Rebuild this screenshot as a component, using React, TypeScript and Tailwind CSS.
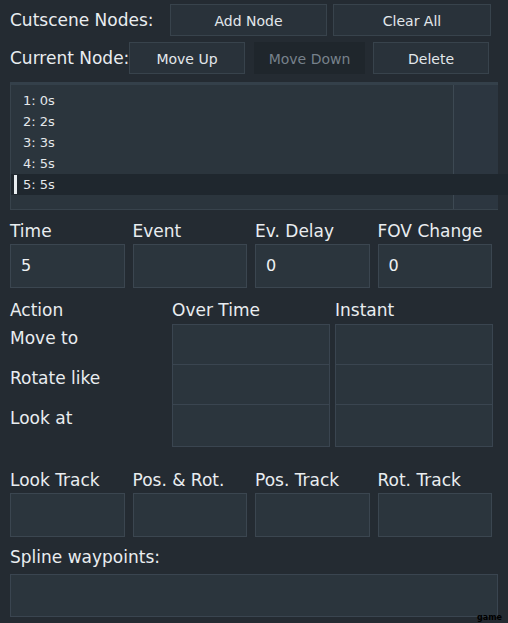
const font = { fontFamily: '"DejaVu Sans", "Liberation Sans", sans-serif' };

function Btn({ label, w, disabled }: { label: string; w: string; disabled?: boolean }) {
  return (
    <div
      className={`${w} h-[32px] flex items-center justify-center text-[14px] pt-[2px] ${
        disabled
          ? "bg-[#1f262c] text-[#77818b]"
          : "bg-[#29323a] text-[#e2e7eb] border border-[#38434c]"
      }`}
    >
      {label}
    </div>
  );
}

function Field({ value, h }: { value?: string; h: string }) {
  return (
    <div className={`${h} bg-[#2b353d] border border-[#3b4650] flex items-center pl-[10px] text-[16px] text-[#eef1f3]`}>
      {value}
    </div>
  );
}

const nodes = ["1: 0s", "2: 2s", "3: 3s", "4: 5s", "5: 5s"];

export default function App() {
  return (
    <div
      style={font}
      className="relative w-[508px] h-[623px] overflow-hidden bg-[#242b32] text-[#e9edf0] pl-[10px]"
    >
      <div className="flex items-center mt-[4px] h-[32px]">
        <div className="w-[160px] text-[17px] pt-[2px]">Cutscene Nodes:</div>
        <Btn label="Add Node" w="w-[157px]" />
        <div className="w-[6px]" />
        <Btn label="Clear All" w="w-[158px]" />
      </div>

      <div className="flex items-center mt-[6px] h-[32px]">
        <div className="w-[119px] text-[17px] pt-[1px] whitespace-nowrap">Current Node:</div>
        <Btn label="Move Up" w="w-[116px]" />
        <div className="w-[9px]" />
        <Btn label="Move Down" w="w-[111px]" disabled />
        <div className="w-[8px]" />
        <Btn label="Delete" w="w-[116px]" />
      </div>

      <div className="relative mt-[8px] w-[488px] h-[128px] bg-[#2b353d] border border-[#38434c] border-t-[3px] border-t-[#34404a]">
        <div className="absolute top-0 bottom-0 left-[442px] w-[45px] bg-[#2c3640] border-l border-[#3d4953]" />
        <div className="relative pt-[5px] flex flex-col">
          {nodes.map((n, i) => (
            <div
              key={i}
              className={`h-[21px] flex items-center text-[13px] text-[#e4e8eb] ${
                i === 4 ? "bg-[#1f272e] mr-[-12px]" : ""
              }`}
            >
              <div className={`w-[3px] h-[19px] ml-[3px] mr-[6px] ${i === 4 ? "bg-[#e8edf0]" : ""}`} />
              {n}
            </div>
          ))}
        </div>
      </div>

      <div className="grid grid-cols-4 gap-x-[8px] w-[482px] mt-[10px]">
        {["Time", "Event", "Ev. Delay", "FOV Change"].map((l) => (
          <div key={l} className="h-[20px] text-[17px] leading-[20px] whitespace-nowrap pt-[1px]">{l}</div>
        ))}
        {["5", "", "0", "0"].map((v, i) => (
          <div key={i} className="mt-[4px]">
            <Field value={v} h="h-[44px]" />
          </div>
        ))}
      </div>

      <div className="flex mt-[12px] h-[20px] text-[17px] leading-[20px]">
        <div className="w-[162px]">Action</div>
        <div className="w-[163px]">Over Time</div>
        <div>Instant</div>
      </div>

      <div className="flex mt-[4px]">
        <div className="w-[162px] flex flex-col text-[17px]">
          {["Move to", "Rotate like", "Look at"].map((l) => (
            <div key={l} className="h-[40px] pt-[4px] leading-[20px]">{l}</div>
          ))}
        </div>
        {[0, 1].map((c) => (
          <div
            key={c}
            className={`w-[158px] h-[123px] bg-[#2b353d] border border-[#3a4550] flex flex-col ${c === 1 ? "ml-[5px]" : ""}`}
          >
            <div className="h-[40px] border-b border-[#3a4550]" />
            <div className="h-[40px] border-b border-[#3a4550]" />
            <div className="flex-1" />
          </div>
        ))}
      </div>

      <div className="grid grid-cols-4 gap-x-[8px] w-[482px] mt-[22px]">
        {["Look Track", "Pos. & Rot.", "Pos. Track", "Rot. Track"].map((l) => (
          <div key={l} className="h-[20px] text-[17px] leading-[20px] whitespace-nowrap pt-[1px]">{l}</div>
        ))}
        {[0, 1, 2, 3].map((i) => (
          <div key={i} className="mt-[4px]">
            <Field h="h-[44px]" />
          </div>
        ))}
      </div>

      <div className="mt-[10px] h-[20px] text-[17px] leading-[20px]">Spline waypoints:</div>
      <div className="mt-[7px] w-[488px] h-[43px] bg-[#2b353d] border border-[#3a4550]" />

      <div className="absolute right-[6px] bottom-[1px] text-[8px] font-bold leading-none text-black">game</div>
    </div>
  );
}
